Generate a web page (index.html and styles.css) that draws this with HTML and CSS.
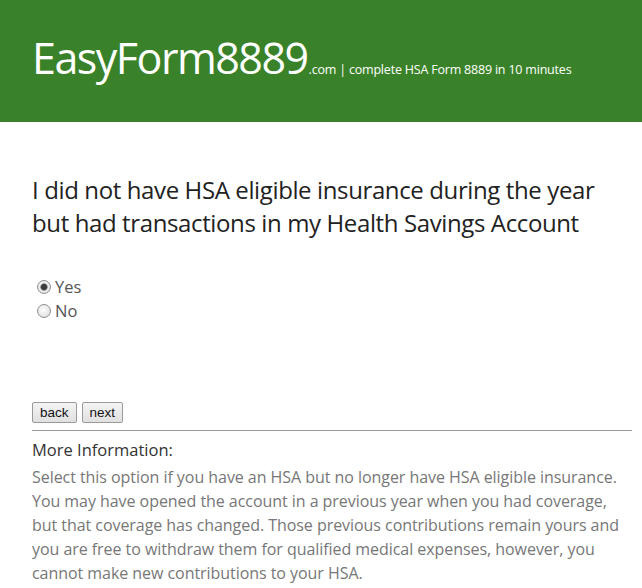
FILE: index.html
```html
<!DOCTYPE html>
<html>
<head>
<meta charset="utf-8">
<link rel="stylesheet" href="styles.css">
</head>
<body>
<header class="banner">
  <div class="brand"><span class="logo">EasyForm8889</span><span class="tag">.com | complete HSA Form 8889 in 10 minutes</span></div>
</header>
<main class="content">
  <h1 class="question">I did not have HSA eligible insurance during the year but had transactions in my Health Savings Account</h1>
  <form class="options">
    <label class="opt"><input class="radio" type="radio" name="a" checked>Yes</label>
    <label class="opt"><input class="radio" type="radio" name="a">No</label>
  </form>
  <div class="buttons"><button class="btn">back</button><button class="btn">next</button></div>
  <hr class="rule">
  <div class="more-title">More Information:</div>
  <p class="more">Select this option if you have an HSA but no longer have HSA eligible insurance. You may have opened the account in a previous year when you had coverage, but that coverage has changed. Those previous contributions remain yours and you are free to withdraw them for qualified medical expenses, however, you cannot make new contributions to your HSA.</p>
</main>
</body>
</html>
```
FILE: styles.css
```css
html, body { margin: 0; padding: 0; background: #fff; }
body { font-family: "Open Sans", "Noto Sans", sans-serif; color: #333; }
.banner { background: #3a8229; height: 122px; padding-left: 32px; box-sizing: border-box; }
.brand { padding-top: 28px; color: #fff; white-space: nowrap; }
.logo { font-size: 43px; letter-spacing: -1.5px; }
.tag { font-size: 12.5px; font-family: "Open Sans", sans-serif; letter-spacing: -0.2px; margin-left: 1px; }
.content { padding: 0 10px 0 32px; }
.question { font-weight: normal; font-size: 24px; line-height: 33px; margin: 51px 0 0; color: #222; letter-spacing: -0.38px; }
.options { margin-top: 36px; display: flex; flex-direction: column; padding-left: 5px; }
.opt { font-size: 16.5px; line-height: 24px; color: #555; display: flex; align-items: center; }
.radio { appearance: none; -webkit-appearance: none; margin: 0 4px 0 0; width: 14px; height: 14px; border-radius: 50%; border: 1px solid #8f8f8f; background: radial-gradient(circle at 45% 40%, #fdfdfd 0%, #e4e4e4 70%, #d0d0d0 100%); box-sizing: border-box; }
.radio:checked { background: radial-gradient(circle, #3c3c3c 0 2.6px, #888 3.4px, transparent 4px), radial-gradient(circle at 45% 40%, #fdfdfd 0%, #e4e4e4 70%, #d0d0d0 100%); }
.buttons { margin-top: 79px; display: flex; gap: 5px; }
.btn { font-family: "Liberation Sans", Arial, sans-serif; font-size: 13.5px; padding: 1px 7px; height: 21px; background: linear-gradient(#f4f4f4, #e0e0e0); border: 1px solid #9a9a9a; border-radius: 2px; color: #111; }
.rule { margin: 7px 0 0; border: 0; border-top: 1px solid #999; }
.more-title { font-size: 16.5px; margin-top: 7px; line-height: 24px; color: #333; }
.more { margin: 3px 0 0; font-size: 16px; line-height: 24px; color: #777; letter-spacing: -0.05px; }
```
